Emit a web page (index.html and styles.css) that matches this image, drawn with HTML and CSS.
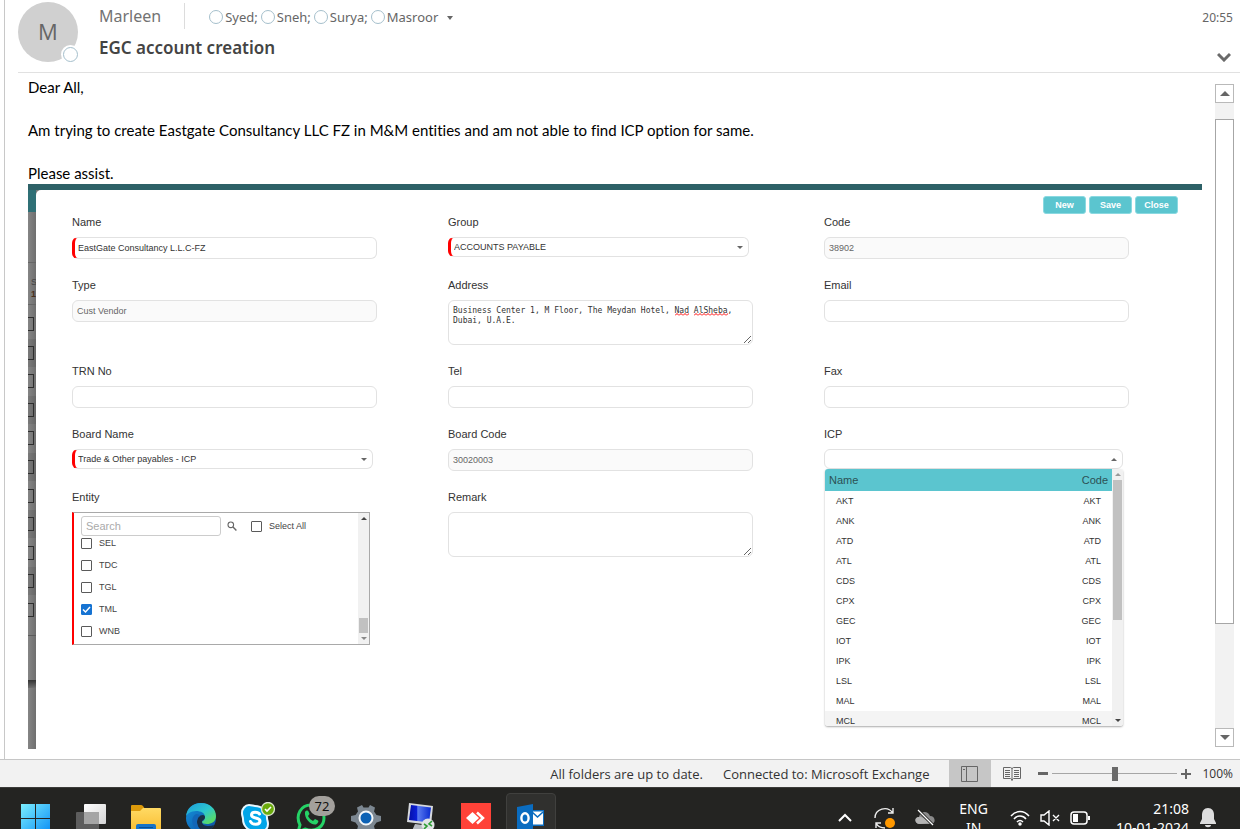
FILE: index.html
```html
<!DOCTYPE html>
<html lang="en">
<head>
    <meta charset="UTF-8">
    <meta name="viewport" content="width=device-width, initial-scale=1.0">
    <title>EGC account creation</title>
    <link rel="stylesheet" href="styles.css">
</head>
<body>
    <main class="mail">
        <header class="mail-header">
            <div class="avatar">M<span class="presence"></span></div>
            <div class="mail-info">
                <div class="from-line">
                    <span class="sender">Marleen</span>
                    <ul class="recipients">
                        <li>Syed;</li>
                        <li>Sneh;</li>
                        <li>Surya;</li>
                        <li>Masroor</li>
                    </ul>
                    <button class="more" type="button" aria-label="Show recipients"></button>
                </div>
                <h1>EGC account creation</h1>
            </div>
            <div class="mail-side">
                <time>20:55</time>
                <button class="expand" type="button" aria-label="Expand header">
                    <svg width="14" height="10" viewBox="0 0 14 10"><path d="M1 2l6 6 6-6" fill="none" stroke="#6a6a6a" stroke-width="3"/></svg>
                </button>
            </div>
        </header>

        <div class="mail-body">
            <article class="message">
                <p>Dear All,</p>
                <p>Am trying to create Eastgate Consultancy LLC FZ in M&amp;M entities and am not able to find ICP option for same.</p>
                <p>Please assist.</p>

                <section class="shot">
                    <div class="strip">
                        <div class="strip-top"></div>
                        <div class="strip-blank"></div>
                        <div class="strip-cell"><span>S</span><b>1</b></div>
                        <div class="strip-rows">
                            <i></i><i></i><i></i><i></i><i></i><i></i><i></i><i></i><i></i><i></i><i></i>
                        </div>
                        <div class="strip-foot"></div>
                        <div class="strip-shadow"></div>
                    </div>

                    <form class="modal">
                        <div class="toolbar">
                            <button type="button">New</button>
                            <button type="button">Save</button>
                            <button type="button">Close</button>
                        </div>
                        <div class="form-grid">
                            <div class="field">
                                <label for="name">Name</label>
                                <input class="required" type="text" id="name" value="EastGate Consultancy L.L.C-FZ">
                            </div>
                            <div class="field">
                                <label for="group">Group</label>
                                <div class="select">
                                    <select class="required" id="group"><option>ACCOUNTS PAYABLE</option></select>
                                </div>
                            </div>
                            <div class="field">
                                <label for="code">Code</label>
                                <input type="text" id="code" value="38902" disabled>
                            </div>

                            <div class="field">
                                <label for="type">Type</label>
                                <input type="text" id="type" value="Cust Vendor" disabled>
                            </div>
                            <div class="field">
                                <label for="address">Address</label>
                                <div class="spell">
                                    <textarea id="address" spellcheck="false">Business Center 1, M Floor, The Meydan Hotel, Nad AlSheba,
Dubai, U.A.E.</textarea>
                                    <span class="typo typo-nad"></span>
                                    <span class="typo typo-sheba"></span>
                                </div>
                            </div>
                            <div class="field">
                                <label for="email">Email</label>
                                <input type="text" id="email">
                            </div>

                            <div class="field">
                                <label for="trn">TRN No</label>
                                <input type="text" id="trn">
                            </div>
                            <div class="field">
                                <label for="tel">Tel</label>
                                <input type="text" id="tel">
                            </div>
                            <div class="field">
                                <label for="fax">Fax</label>
                                <input type="text" id="fax">
                            </div>

                            <div class="field">
                                <label for="boardName">Board Name</label>
                                <div class="select">
                                    <select class="required" id="boardName"><option>Trade &amp; Other payables - ICP</option></select>
                                </div>
                            </div>
                            <div class="field">
                                <label for="boardCode">Board Code</label>
                                <input type="text" id="boardCode" value="30020003" disabled>
                            </div>
                            <div class="field">
                                <label for="icp">ICP</label>
                                <div class="select open">
                                    <select id="icp"><option></option></select>
                                    <div class="dropdown">
                                        <table>
                                            <thead><tr><th>Name</th><th>Code</th></tr></thead>
                                            <tbody>
                                                <tr><td>AKT</td><td>AKT</td></tr>
                                                <tr><td>ANK</td><td>ANK</td></tr>
                                                <tr><td>ATD</td><td>ATD</td></tr>
                                                <tr><td>ATL</td><td>ATL</td></tr>
                                                <tr><td>CDS</td><td>CDS</td></tr>
                                                <tr><td>CPX</td><td>CPX</td></tr>
                                                <tr><td>GEC</td><td>GEC</td></tr>
                                                <tr><td>IOT</td><td>IOT</td></tr>
                                                <tr><td>IPK</td><td>IPK</td></tr>
                                                <tr><td>LSL</td><td>LSL</td></tr>
                                                <tr><td>MAL</td><td>MAL</td></tr>
                                                <tr class="hover"><td>MCL</td><td>MCL</td></tr>
                                            </tbody>
                                        </table>
                                        <div class="scroll">
                                            <span class="arrow up faded"></span>
                                            <span class="thumb icp-thumb"></span>
                                            <span class="arrow down"></span>
                                        </div>
                                    </div>
                                </div>
                            </div>

                            <div class="field">
                                <label for="search">Entity</label>
                                <div class="entity">
                                    <div class="entity-main">
                                        <div class="entity-search">
                                            <input type="text" id="search" placeholder="Search">
                                            <svg width="10" height="10" viewBox="0 0 10 10"><circle cx="3.8" cy="3.8" r="2.8" fill="none" stroke="#666" stroke-width="1.1"/><path d="M6 6l3.400 3.400" stroke="#666" stroke-width="1.4"/></svg>
                                            <label class="check select-all"><input type="checkbox">Select All</label>
                                        </div>
                                        <div class="entity-list">
                                            <label class="check"><input type="checkbox">SEL</label>
                                            <label class="check"><input type="checkbox">TDC</label>
                                            <label class="check"><input type="checkbox">TGL</label>
                                            <label class="check"><input type="checkbox" checked>TML</label>
                                            <label class="check"><input type="checkbox">WNB</label>
                                        </div>
                                    </div>
                                    <div class="scroll">
                                        <span class="arrow up"></span>
                                        <span class="thumb entity-thumb"></span>
                                        <span class="arrow down faded"></span>
                                    </div>
                                </div>
                            </div>
                            <div class="field">
                                <label for="remark">Remark</label>
                                <textarea id="remark"></textarea>
                            </div>
                        </div>
                    </form>
                </section>
            </article>

            <div class="page-scroll">
                <button type="button" aria-label="Scroll up"><span class="arrow up"></span></button>
                <span class="page-thumb"></span>
                <button type="button" aria-label="Scroll down"><span class="arrow down"></span></button>
            </div>
        </div>
    </main>

    <div class="statusbar">
        <span>All folders are up to date.</span>
        <span class="connected">Connected to: Microsoft Exchange</span>
        <button class="view active" type="button" aria-label="Normal view">
            <svg width="18" height="16" viewBox="0 0 18 16" fill="none" stroke="#666"><path d="M.5.5h16v15H.5zM5.500.5v15M2 3.500h2"/></svg>
        </button>
        <button class="view" type="button" aria-label="Reading view">
            <svg width="18" height="16" viewBox="0 0 18 16" fill="none" stroke="#666"><path d="M.5 1.500h7l1.500 1 1.500-1h7v11h-7L9 14l-1.500-1.500h-7zM9 2v13M2 4.500h5M2 6.500h5M2 8.500h5M2 10.500h5M11 4.500h5M11 6.500h5M11 8.500h5M11 10.500h5"/></svg>
        </button>
        <button class="zoom-btn" type="button" aria-label="Zoom out"><svg width="10" height="10" viewBox="0 0 10 10"><path d="M0 4.500h10" stroke="#666" stroke-width="3"/></svg></button>
        <input class="zoom" type="range" min="0" max="100" value="50" aria-label="Zoom">
        <button class="zoom-btn" type="button" aria-label="Zoom in"><svg width="10" height="10" viewBox="0 0 10 10"><path d="M0 5h10M5 0v10" stroke="#666" stroke-width="2"/></svg></button>
        <span class="percent">100%</span>
    </div>

    <footer class="taskbar">
        <div class="taskbar-inner">
            <nav class="apps">
                <button type="button" aria-label="Start">
                    <svg width="30" height="30" viewBox="0 0 30 30">
                        <defs><linearGradient id="win" x1="0" y1="0" x2="30" y2="30" gradientUnits="userSpaceOnUse"><stop offset="0" stop-color="#7df0ff"/><stop offset="1" stop-color="#0a8cf5"/></linearGradient></defs>
                        <path d="M0 1h14v14H0zM15 1h14v14H15zM0 16h14v14H0zM15 16h14v14H15z" fill="url(#win)"/>
                    </svg>
                </button>
                <button type="button" aria-label="Task view">
                    <svg width="30" height="30" viewBox="0 0 30 30">
                        <defs><linearGradient id="tv" x1="0" y1="0" x2="1" y2="1"><stop offset="0" stop-color="#fff"/><stop offset="1" stop-color="#d4d4d4"/></linearGradient></defs>
                        <rect x="8" y="1" width="22" height="20" rx="1" fill="url(#tv)"/>
                        <rect y="9" width="23" height="20" rx="1" fill="#5d5d5d"/>
                        <path d="M8 9h15v12H8z" fill="#a5a5a5"/>
                    </svg>
                </button>
                <button type="button" aria-label="File Explorer">
                    <svg width="30" height="30" viewBox="0 0 30 30">
                        <defs><linearGradient id="folder" x1="0" y1="0" x2="0" y2="1"><stop offset="0" stop-color="#ffda64"/><stop offset="1" stop-color="#f9bb2d"/></linearGradient></defs>
                        <path d="M0 3q0-1 1-1h9q1 0 2 1l2 3v4H0z" fill="#dc9a0b"/>
                        <path d="M0 8h9l3-3h17q1 0 1 1v24H0z" fill="url(#folder)"/>
                        <rect x="5" y="21" width="20" height="9" rx="2" fill="#1673c9"/>
                        <path d="M8 24.500h14" stroke="#0b4d92"/>
                    </svg>
                </button>
                <button type="button" aria-label="Edge">
                    <svg width="30" height="30" viewBox="0 0 30 30">
                        <defs>
                            <linearGradient id="edgeTop" x1="0" y1="0" x2="1" y2="1"><stop offset="0" stop-color="#1d9bdc"/><stop offset=".5" stop-color="#2cc6cf"/><stop offset="1" stop-color="#69e340"/></linearGradient>
                            <linearGradient id="edgeLow" x1="0" y1="0" x2="1" y2="1"><stop offset="0" stop-color="#1492dd"/><stop offset="1" stop-color="#0c4d9c"/></linearGradient>
                        </defs>
                        <circle cx="15" cy="15" r="15" fill="url(#edgeLow)"/>
                        <path d="M0 13C1 5 7 0 15 0c9 0 15 6 15 13 0 6-5 8-9 8-3 0-5-1-5-2 0-1 3-1 3-5s-4-6-9-6c-5 0-9 3-10 5z" fill="url(#edgeTop)"/>
                        <path d="M17 12c-4 0-6 3-6 7 0 5 4 9 9 10 4-1 7-4 8-7-5 2-12 1-12-3 0-2 3-2 3-5 0-1-1-2-2-2z" fill="#1a2e44"/>
                        <path d="M10 11c-4 2-5 8-2 13 2 3 5 5 8 6-3-3-5-7-5-11 0-3 1-5 3-6-1-2-3-2-4-2z" fill="#1266b8"/>
                    </svg>
                </button>
                <button class="skype" type="button" aria-label="Skype">
                    <svg width="36" height="32" viewBox="0 0 36 32">
                        <path d="M9 3c3 0 4 1 6 1 7 0 12 5 12 12 0 2 1 3 1 6 0 4-3 8-8 8-2 0-3-1-5-1C8 29 3 24 3 17c0-2-1-3-1-6 0-4 3-8 7-8z" fill="#00a5e8" stroke="#e8f7ff" stroke-width="2"/>
                        <path d="M19.500 12c-1-2-8-3-8 1 0 4 8.500 2 8.500 6 0 4.500-8 4-9.500.500" fill="none" stroke="#fff" stroke-width="3" stroke-linecap="round"/>
                        <circle cx="28" cy="7" r="6.500" fill="#6bab0c" stroke="#dfe8d2" stroke-width="1.300"/>
                        <path d="M25 7l2 2 4-4" fill="none" stroke="#fff" stroke-width="1.600"/>
                    </svg>
                </button>
                <button class="whatsapp" type="button" aria-label="WhatsApp">
                    <svg width="30" height="30" viewBox="0 0 30 30">
                        <path d="M2 29l2-7C-1 12 5 2 15 2c8 0 13 6 13 13 0 9-9 15-19 11z" fill="none" stroke="#25d366" stroke-width="3"/>
                        <path d="M9 9c1-2 3-2 3.500-.500l1 2.500-1.500 2c1 2 3 4 5 5l2-2 3 1.500c1 .500 0 3-2 4-5 1-12-6-11-12.500z" fill="#25d366"/>
                    </svg>
                    <span class="badge">72</span>
                </button>
                <button type="button" aria-label="Settings">
                    <svg width="30" height="30" viewBox="0 0 30 30">
                        <path d="M11 2l1.500 2.500h5L19 2l5 2.500-1 4 2.500 3.500L30 13v5l-4.500 1.500L23 23l1 4-5 2.500-2-3h-4l-2 3L6 27l1-4-2.500-3.500L0 18v-5l4.500-1L7 8.500l-1-4z" fill="#7c8791"/>
                        <circle cx="15" cy="15" r="6.500" fill="#0d62b5" stroke="#f2f6f9" stroke-width="2"/>
                    </svg>
                </button>
                <button type="button" aria-label="Remote Desktop">
                    <svg width="30" height="30" viewBox="0 0 30 30">
                        <defs><linearGradient id="rdp" x1="0" y1="0" x2="1" y2="0"><stop offset="0" stop-color="#0610a8"/><stop offset=".35" stop-color="#0b20d8"/><stop offset=".4" stop-color="#5b7cf0"/><stop offset="1" stop-color="#0a2bd0"/></linearGradient></defs>
                        <path d="M3 0l24 3-2 19L1 19z" fill="#d6d9de"/>
                        <path d="M5 2l20 2.500-2 15L3 17z" fill="url(#rdp)"/>
                        <path d="M9 21l7 1 1 4 6 4H5z" fill="#b8bcc2"/>
                        <circle cx="22" cy="22" r="6.500" fill="#e1e4e5"/>
                        <path d="M18 21l3 2-3 3M26 18l-3 3 3 2" fill="none" stroke="#2f9e36" stroke-width="1.600"/>
                    </svg>
                </button>
                <button type="button" aria-label="AnyDesk">
                    <svg width="30" height="30" viewBox="0 0 30 30">
                        <path d="M0 0h30v30H0z" fill="#ff4238"/>
                        <path d="M5 15l6.500-6 6.500 6-6.500 6z" fill="#fff"/>
                        <path d="M16 9.500l6 5.500-6 5.500" fill="none" stroke="#fff" stroke-width="2.500"/>
                    </svg>
                </button>
                <button class="current" type="button" aria-label="Outlook">
                    <svg width="28" height="28" viewBox="0 0 28 28">
                        <path d="M14 6h13v16H14z" fill="#0a6cc0"/>
                        <path d="M15.500 7.500h10.500v13H15.500z" fill="#fff"/>
                        <path d="M15 8l5.500 5L26 8" fill="none" stroke="#0a6cc0" stroke-width="1.600"/>
                        <path d="M0 3l16-3v28L0 25z" fill="#0a6cc0"/>
                        <ellipse cx="8" cy="14" rx="3.600" ry="4.800" fill="none" stroke="#fff" stroke-width="2.400"/>
                    </svg>
                </button>
            </nav>

            <div class="tray">
                <svg width="14" height="10" viewBox="0 0 14 10"><path d="M1 8l6-6 6 6" fill="none" stroke="#fff" stroke-width="2"/></svg>
                <svg width="22" height="22" viewBox="0 0 22 22"><path d="M1 11C1 2 13-2 19 6M19 1v5h-5M2 21v-5h5M2 16c2 4 6 5 9 5" fill="none" stroke="#eee" stroke-width="1.400"/><circle cx="16" cy="16" r="5" fill="#ff9800"/></svg>
                <svg width="20" height="18" viewBox="0 0 20 18"><path d="M5 15c-6 0-6-7-1-7 1-6 9-7 11-1 6 0 6 8 1 8z" fill="#8a8a8a"/><path d="M5 15c-6 0-6-7-1-7 4-1 6 4 14 6z" fill="#b4b4b4"/><path d="M3 1l15 15" stroke="#242422" stroke-width="3"/><path d="M3 1l15 15" stroke="#fff" stroke-width="1.300"/></svg>
                <span class="lang">ENG<br>IN</span>
                <svg width="20" height="16" viewBox="0 0 20 16" fill="none" stroke="#fff" stroke-width="1.500"><path d="M1 6c5-6 13-6 18 0M4 9c3-4 9-4 12 0M7 12c2-2 4-2 6 0"/><circle cx="10" cy="14" r="1" fill="#fff"/></svg>
                <svg width="20" height="16" viewBox="0 0 20 16" fill="none" stroke="#fff" stroke-width="1.400"><path d="M1 5h3l5-4v14l-5-4H1zM13 5l6 6M19 5l-6 6"/></svg>
                <svg width="20" height="14" viewBox="0 0 20 14"><rect x="1" y="1" width="16" height="12" rx="3" fill="none" stroke="#fff" stroke-width="1.500"/><path d="M3 3h5v8H3zM18 5h2v4h-2z" fill="#fff"/></svg>
                <span class="clock">21:08<br>10-01-2024</span>
                <svg width="18" height="20" viewBox="0 0 18 20"><path d="M9 0c4 0 6 3 6 7v4l2 4v1H1v-1l2-4V7c0-4 2-7 6-7zM6 17h6c0 3-6 3-6 0z" fill="#ddd"/></svg>
            </div>
        </div>
    </footer>
</body>
</html>
```
FILE: styles.css
```css
* {
    box-sizing: border-box;
}
body {
    margin: 0;
    height: 100vh;
    display: flex;
    flex-direction: column;
    overflow: hidden;
    background-color: #fff;
    font-family: "Noto Sans", "Open Sans", sans-serif;
    color: #444;
}
button {
    padding: 0;
    border: none;
    background: none;
    font-family: inherit;
}

/* mail header */
.mail {
    flex: 1;
    min-height: 0;
    display: flex;
    flex-direction: column;
    margin-left: 4px;
    border-left: 1px solid #c8c8c8;
}
.mail-header {
    display: flex;
    height: 73px;
    margin-left: 13px;
    border-bottom: 1px solid #e1e1e1;
}
.avatar {
    position: relative;
    width: 60px;
    height: 60px;
    margin-top: 2px;
    border-radius: 50%;
    background-color: #d0d0d0;
    color: #666;
    font-family: "Open Sans", sans-serif;
    font-size: 22px;
    line-height: 58px;
    text-align: center;
}
.presence {
    position: absolute;
    right: 0;
    bottom: 0;
    width: 15px;
    height: 15px;
    border: 1px solid #a5bfcc;
    border-radius: 50%;
    background-color: #fff;
    box-shadow: 0 0 0 2px #fff;
}
.mail-info {
    flex: 1;
    padding: 2px 0 0 21px;
}
.from-line {
    display: flex;
    align-items: center;
    height: 28px;
}
.sender {
    padding-right: 23px;
    border-right: 1px solid #dcdcdc;
    font-size: 16px;
    line-height: 26px;
    color: #737373;
}
.recipients {
    display: flex;
    gap: 3px;
    margin: 2px 0 0 24px;
    padding: 0;
    list-style: none;
    font-size: 13px;
    color: #666;
}
.recipients li {
    display: flex;
    align-items: center;
    gap: 2px;
}
.recipients li::before {
    content: "";
    width: 12px;
    height: 12px;
    border: 1px solid #a5bfcc;
    border-radius: 50%;
}
.more {
    margin: 4px 0 0 9px;
    border: 3px solid transparent;
    border-top: 4px solid #666;
    border-bottom: 0;
}
h1 {
    margin: 5px 0 0;
    font-size: 17px;
    line-height: 25px;
    font-weight: 600;
}
.mail-side {
    display: flex;
    flex-direction: column;
    align-items: flex-end;
    padding: 8px 7px 0 0;
    font-size: 12px;
    line-height: 20px;
    color: #666;
}
.expand {
    margin: 24px 2px 0 0;
    line-height: 0;
}

/* message */
.mail-body {
    flex: 1;
    min-height: 0;
    display: flex;
    gap: 13px;
    padding: 4px 6px 10px 23px;
}
.message {
    flex: 1;
    display: flex;
    flex-direction: column;
}
.message p {
    margin: 0 0 22px;
    font-family: Lato, sans-serif;
    font-size: 15px;
    font-variant-ligatures: none;
    line-height: 21px;
    color: #000;
}
.message p:nth-of-type(3) {
    margin-bottom: 0;
}
.shot {
    flex: 1;
    min-height: 0;
    display: flex;
    padding-top: 6px;
    background: linear-gradient(#2d6167 6px, #7b7b7b 6px);
    font-family: "Liberation Sans", Arial, sans-serif;
}

/* page behind the modal */
.strip {
    width: 8px;
    overflow: hidden;
    display: flex;
    flex-direction: column;
    background: linear-gradient(90deg, #858585, #6f6f6f);
}
.strip-top {
    height: 22px;
    background-color: #2f7076;
}
.strip-blank {
    height: 51px;
    border-bottom: 1px solid #666;
}
.strip-cell {
    height: 42px;
    padding: 13px 0 0 3px;
    border-bottom: 1px solid #666;
    font-size: 9px;
    line-height: 12px;
    color: #444;
}
.strip-cell span,
.strip-cell b {
    display: block;
}
.strip-cell b {
    color: #4a2f1c;
}
.strip-rows {
    display: grid;
    height: 314px;
    margin-top: 5px;
    grid-template-rows: repeat(11, 1fr);
}
.strip-rows i {
    display: flex;
    align-items: center;
}
.strip-rows i:nth-child(even) {
    background-color: rgba(0, 0, 0, 0.08);
}
.strip-rows i::before {
    content: "";
    width: 5px;
    height: 12px;
    border: 1px solid #2e2e2e;
    border-left: 0;
}
.strip-foot {
    height: 56px;
    padding-top: 11px;
}
.strip-foot::before {
    content: "";
    display: block;
    border-top: 1px solid #5c5c5c;
}
.strip-shadow {
    height: 8px;
    background: linear-gradient(#333, #707070);
}

/* modal form */
.modal {
    flex: 1;
    padding: 6px 2px 0 36px;
    border-radius: 5px 0 0 0;
    background-color: #fff;
}
.toolbar {
    display: flex;
    justify-content: flex-end;
    gap: 3px;
    padding-right: 22px;
}
.toolbar button {
    width: 43px;
    height: 18px;
    border: 1px solid #8ad9e1;
    border-radius: 3px;
    background-color: #5bc5cf;
    color: #fff;
    font-size: 9px;
    font-weight: bold;
}
.form-grid {
    display: grid;
    grid-template-columns: repeat(3, 1fr);
    row-gap: 18px;
}
.field {
    padding-right: 71px;
}
.field > label {
    display: block;
    margin-bottom: 7px;
    font-size: 11px;
    line-height: 16px;
    color: #333;
}
.field > input,
.field textarea,
.field select {
    display: block;
    width: 100%;
    height: 22px;
    padding: 0 4px;
    border: 1px solid #e2e2e2;
    border-radius: 6px;
    background-color: #fff;
    font-family: inherit;
    font-size: 9px;
    color: #333;
}
.field > input:disabled {
    background-color: #fafafa;
    color: #666;
}
.field .required {
    padding-left: 3px;
    border-left: 3px solid #f00;
}
.field textarea {
    height: 45px;
    padding: 5px 4px;
    font-family: "DejaVu Sans Mono", monospace;
    font-size: 8px;
    line-height: 10px;
}
.spell {
    position: relative;
}
.typo {
    position: absolute;
    top: 13px;
    height: 3px;
    background: url("data:image/svg+xml,%3Csvg xmlns='http://www.w3.org/2000/svg' width='4' height='3'%3E%3Cpath d='M0 2.500l2-2 2 2' fill='none' stroke='red'/%3E%3C/svg%3E") repeat-x;
}
.typo-nad {
    left: 227px;
    width: 14px;
}
.typo-sheba {
    left: 246px;
    width: 34px;
}
.select {
    position: relative;
    margin-right: 4px;
}
.field select {
    height: 20px;
    appearance: none;
}
.select::after {
    content: "";
    position: absolute;
    top: 9px;
    right: 6px;
    border: 3px solid transparent;
    border-top-color: #666;
    border-bottom: 0;
}
.select.open {
    margin-right: 6px;
}
.select.open::after {
    border-top: 0;
    border-bottom: 3px solid #666;
}

/* ICP list */
.dropdown {
    position: absolute;
    top: 20px;
    left: 1px;
    right: 0;
    height: 257px;
    display: flex;
    overflow: hidden;
    border-radius: 3px;
    background-color: #fff;
    box-shadow: 0 1px 2px #aaa;
}
.dropdown table {
    flex: 1;
    align-self: flex-start;
    border-collapse: collapse;
    font-size: 9px;
    color: #333;
}
.dropdown th {
    height: 22px;
    padding: 0 4px;
    background-color: #5bc5cf;
    font-size: 11px;
    font-weight: normal;
    text-align: left;
    color: #2c5054;
}
.dropdown td {
    height: 20px;
    padding: 0 11px;
}
.dropdown th:last-child,
.dropdown td:last-child {
    text-align: right;
}
.dropdown .hover {
    background-color: #f4f4f4;
}
.scroll {
    width: 11px;
    display: flex;
    flex-direction: column;
    align-items: center;
    padding: 4px 0;
    background-color: #f1f1f1;
}
.scroll .thumb {
    width: 9px;
    background-color: #c1c1c1;
}
.arrow {
    border: 3px solid transparent;
}
.arrow.up {
    border-top: 0;
    border-bottom-color: #444;
}
.arrow.down {
    border-bottom: 0;
    border-top-color: #444;
}
.arrow.up.faded {
    border-bottom-color: #999;
}
.arrow.down.faded {
    border-top-color: #888;
}
.icp-thumb {
    height: 140px;
    margin: 4px 0 auto;
}
.entity-thumb {
    height: 15px;
    margin: auto 0 4px;
}

/* entity box */
.entity {
    display: flex;
    height: 133px;
    margin-right: 7px;
    border: 1px solid #a9a9a9;
    border-left: 2px solid #f00;
}
.entity-main {
    flex: 1;
    padding: 3px 0 0 7px;
}
.entity-search {
    display: flex;
    align-items: center;
    height: 20px;
}
.entity-search > input {
    width: 140px;
    height: 20px;
    padding: 0 4px;
    border: 1px solid #ccc;
    border-radius: 3px;
    font-family: inherit;
    font-size: 11px;
}
.entity-search > input::placeholder {
    color: #aaa;
}
.entity-search svg {
    margin: 0 14px 0 6px;
}
.entity-list {
    display: flex;
    flex-direction: column;
    justify-content: flex-end;
    height: 104px;
    margin-top: 2px;
    overflow: hidden;
}
.check {
    display: flex;
    flex-shrink: 0;
    align-items: center;
    gap: 7px;
    height: 22px;
    font-size: 9px;
    color: #444;
}
.check input {
    width: 11px;
    height: 11px;
    margin: 0;
    border: 1px solid #5a5a5a;
    border-radius: 1px;
    appearance: none;
}
.check input:checked {
    border-color: #1673d2;
    background: #1673d2 url("data:image/svg+xml,%3Csvg xmlns='http://www.w3.org/2000/svg' width='9' height='9'%3E%3Cpath d='M1 4.500l2.500 2.500L8 2' fill='none' stroke='white' stroke-width='1.500'/%3E%3C/svg%3E") center no-repeat;
}

/* scrollbar of the reading pane */
.page-scroll {
    display: flex;
    flex-direction: column;
    width: 19px;
    margin: 7px 0 2px;
    background-color: #f2f2f2;
}
.page-scroll button {
    display: flex;
    align-items: center;
    justify-content: center;
    height: 19px;
    border: 1px solid #b9b9b9;
    background-color: #fff;
}
.page-scroll .arrow {
    border-width: 5px;
}
.page-scroll .arrow.up {
    border-top: 0;
    border-bottom-color: #666;
}
.page-scroll .arrow.down {
    border-bottom: 0;
    border-top-color: #666;
}
.page-thumb {
    flex: 1;
    margin: 16px 0 104px;
    border: 1px solid #a6a6a6;
    background-color: #fff;
}

/* status bar */
.statusbar {
    display: flex;
    align-items: center;
    justify-content: flex-end;
    height: 28px;
    padding-right: 7px;
    border-top: 1px solid #c6c6c6;
    background-color: #f2f2f2;
    font-family: "Open Sans", sans-serif;
    font-size: 13px;
    color: #333;
}
.connected {
    margin: 0 20px;
}
.view {
    display: flex;
    align-items: center;
    justify-content: center;
    align-self: stretch;
    width: 42px;
}
.view.active {
    background-color: #c6c6c6;
}
.zoom-btn {
    width: 10px;
    line-height: 0;
}
.statusbar .view + .zoom-btn {
    margin-left: 5px;
}
.zoom {
    width: 125px;
    height: 14px;
    margin: 0 4px;
    appearance: none;
    background: linear-gradient(#a6a6a6, #a6a6a6) center / 100% 1px no-repeat;
}
.zoom::-webkit-slider-thumb {
    width: 6px;
    height: 14px;
    appearance: none;
    background-color: #6a6a6a;
}
.percent {
    margin-left: 11px;
    font-size: 12px;
}

/* taskbar */
.taskbar {
    height: 42px;
    overflow: hidden;
    border-top: 1px solid #3c3c3a;
    background-color: #242422;
    color: #fff;
}
.taskbar-inner {
    display: flex;
    align-items: center;
    justify-content: space-between;
    height: 60px;
    padding: 0 23px 0 11px;
}
.apps {
    display: flex;
    gap: 5px;
}
.apps button {
    position: relative;
    display: flex;
    align-items: center;
    justify-content: center;
    width: 50px;
    height: 50px;
}
.apps .skype {
    padding-left: 4px;
}
.apps .current {
    border: 1px solid #40403e;
    border-radius: 4px;
    background-color: #30302e;
}
.badge {
    position: absolute;
    top: 3px;
    right: 1px;
    width: 26px;
    border-radius: 10px;
    background-color: #a3a09c;
    font-size: 13px;
    line-height: 20px;
    color: #111;
}
.tray {
    display: flex;
    align-items: center;
    font-size: 14px;
    line-height: 19px;
}
.tray svg {
    margin-right: 10px;
}
.tray svg:nth-of-type(1) {
    margin-right: 22px;
}
.tray svg:nth-of-type(2) {
    margin-right: 19px;
}
.tray svg:nth-of-type(3) {
    margin-right: 24px;
}
.tray svg:last-child {
    margin: 0;
}
.lang {
    margin-right: 22px;
    text-align: center;
}
.clock {
    margin: 0 10px 0 16px;
    text-align: right;
}
```
